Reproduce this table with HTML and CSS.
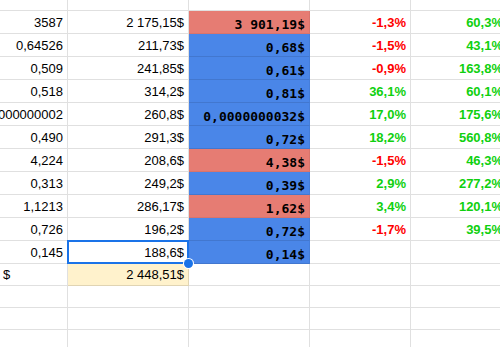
FILE: index.html
```html
<!DOCTYPE html>
<html>
<head>
<meta charset="utf-8">
<link rel="stylesheet" href="styles.css">
</head>
<body>
<div class="sheet">
  <div class="c"></div><div class="c"></div><div class="c"></div><div class="c"></div><div class="c"></div>

  <div class="c">3587</div><div class="c">2 175,15$</div><div class="c m red">3 901,19$</div><div class="c p neg">-1,3%</div><div class="c p pos">60,3%</div>
  <div class="c">0,64526</div><div class="c">211,73$</div><div class="c m blue">0,68$</div><div class="c p neg">-1,5%</div><div class="c p pos">43,1%</div>
  <div class="c">0,509</div><div class="c">241,85$</div><div class="c m blue">0,61$</div><div class="c p neg">-0,9%</div><div class="c p pos">163,8%</div>
  <div class="c">0,518</div><div class="c">314,2$</div><div class="c m blue">0,81$</div><div class="c p pos">36,1%</div><div class="c p pos">60,1%</div>
  <div class="c">0,000000002</div><div class="c">260,8$</div><div class="c m blue">0,0000000032$</div><div class="c p pos">17,0%</div><div class="c p pos">175,6%</div>
  <div class="c">0,490</div><div class="c">291,3$</div><div class="c m blue">0,72$</div><div class="c p pos">18,2%</div><div class="c p pos">560,8%</div>
  <div class="c">4,224</div><div class="c">208,6$</div><div class="c m red">4,38$</div><div class="c p neg">-1,5%</div><div class="c p pos">46,3%</div>
  <div class="c">0,313</div><div class="c">249,2$</div><div class="c m blue">0,39$</div><div class="c p pos">2,9%</div><div class="c p pos">277,2%</div>
  <div class="c">1,1213</div><div class="c">286,17$</div><div class="c m red">1,62$</div><div class="c p pos">3,4%</div><div class="c p pos">120,1%</div>
  <div class="c">0,726</div><div class="c">196,2$</div><div class="c m blue">0,72$</div><div class="c p neg">-1,7%</div><div class="c p pos">39,5%</div>
  <div class="c">0,145</div><div class="c sel">188,6$<span class="handle"></span></div><div class="c m blue">0,14$</div><div class="c"></div><div class="c"></div>

  <div class="c left">$</div><div class="c total">2 448,51$</div><div class="c"></div><div class="c"></div><div class="c"></div>

  <div class="c"></div><div class="c"></div><div class="c"></div><div class="c"></div><div class="c"></div>
  <div class="c"></div><div class="c"></div><div class="c"></div><div class="c"></div><div class="c"></div>
  <div class="c"></div><div class="c"></div><div class="c"></div><div class="c"></div><div class="c"></div>
</div>
</body>
</html>
```
FILE: styles.css
```css
html, body {
  margin: 0;
  padding: 0;
  overflow: hidden;
  background: #fff;
}

.sheet {
  display: grid;
  grid-template-columns: 68px 121px 121px 101px 97px;
  grid-template-rows: 11px repeat(11, 23px) 22px repeat(3, 22px);
  width: 508px;
  font-family: "Liberation Sans", Arial, sans-serif;
  font-size: 13px;
  color: #000;
}

.c {
  box-sizing: border-box;
  border-right: 1px solid rgba(0, 0, 0, 0.12);
  border-bottom: 1px solid rgba(0, 0, 0, 0.12);
  display: flex;
  align-items: flex-end;
  justify-content: flex-end;
  padding: 0 4px 3px 3px;
  white-space: nowrap;
  line-height: 15px;
}

.left {
  justify-content: flex-start;
}

.m {
  font-family: "DejaVu Sans Mono", "Liberation Mono", monospace;
  font-weight: bold;
  padding-bottom: 1px;
}

.red {
  background: #e67c73;
  border-right-color: rgba(0, 0, 0, 0.06);
  border-bottom-color: rgba(0, 0, 0, 0.06);
}

.blue {
  background: #4a86e8;
  border-right-color: rgba(0, 0, 0, 0.06);
  border-bottom-color: rgba(0, 0, 0, 0.1);
}

.p {
  font-weight: bold;
}

.neg {
  color: #ff0000;
}

.pos {
  color: #0fd00f;
}

.total {
  background: #fff2cc;
}

.sel {
  position: relative;
  z-index: 2;
}

.sel::after {
  content: "";
  position: absolute;
  top: -1px;
  left: -1px;
  right: -1px;
  bottom: -1px;
  border: 2px solid #1a73e8;
}

.handle {
  position: absolute;
  right: -5px;
  bottom: -5px;
  width: 9px;
  height: 9px;
  border-radius: 50%;
  background: #1a73e8;
  box-shadow: 0 0 0 1px #fff;
  z-index: 3;
}
```
